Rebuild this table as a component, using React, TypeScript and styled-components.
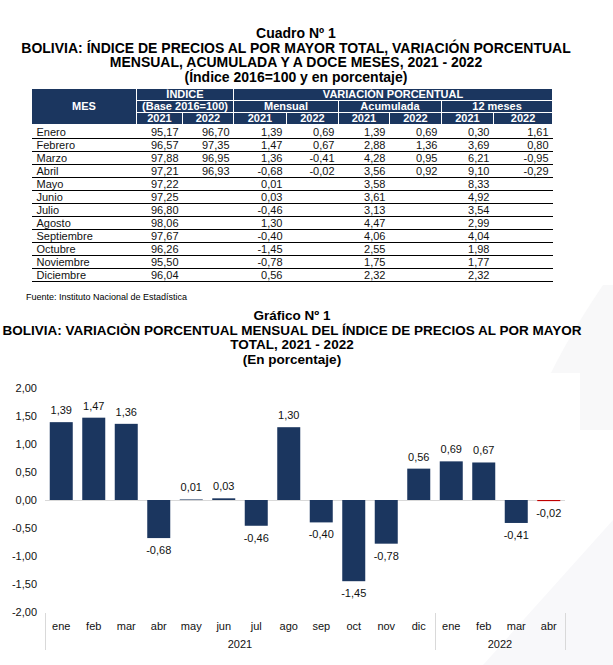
import React from "react";
import styled, { createGlobalStyle } from "styled-components";

const GlobalStyle = createGlobalStyle`
  html, body { margin: 0; padding: 0; background: #ffffff; }
  body { font-family: "Liberation Sans", Arial, sans-serif; color: #000; }
`;

const NAVY = "#1b365f";
const NARROW = `"Liberation Sans Narrow", "Arial Narrow", "Liberation Sans", Arial, sans-serif`;

const Page = styled.div`
  position: relative;
  width: 613px;
  height: 665px;
  overflow: hidden;
  background: #ffffff;
`;

const Decoration = styled.svg`
  position: absolute;
  right: 0;
  top: 0;
  z-index: 0;
`;

const Content = styled.div`
  position: relative;
  z-index: 1;
  width: 584px;
  display: flex;
  flex-direction: column;
`;

const TitleBlock = styled.div<{ $top: number; $size: number; $shift: number }>`
  margin-top: ${(p) => p.$top}px;
  padding-left: ${(p) => p.$shift}px;
  text-align: center;
  font-family: ${NARROW};
  font-weight: bold;
  font-size: ${(p) => p.$size}px;
  line-height: 14.5px;
  color: #000;
  white-space: nowrap;
`;

const TitleLine = styled.div``;

const Table = styled.table`
  width: 521px;
  margin: 4px 0 0 31px;
  border-collapse: collapse;
  table-layout: fixed;
  font-family: "Liberation Sans", Arial, sans-serif;
  font-size: 11px;
`;

const Th = styled.th<{ $last?: boolean; $noBottom?: boolean }>`
  background: ${NAVY};
  color: #ffffff;
  font-weight: bold;
  height: 11px;
  line-height: 11px;
  padding: 0;
  text-align: center;
  border: 1px solid #ffffff;
  border-bottom-width: ${(p) => (p.$last ? 2 : 1)}px;
  ${(p) => (p.$noBottom ? "border-bottom: none;" : "")}
  white-space: nowrap;
  overflow: hidden;
`;

const Tr = styled.tr``;

const Td = styled.td<{ $label?: boolean }>`
  height: 12px;
  line-height: 12px;
  padding: ${(p) => (p.$label ? "0 0 0 5px" : "0 4px 0 0")};
  text-align: ${(p) => (p.$label ? "left" : "right")};
  border-bottom: 1px solid #000;
  color: #111;
  white-space: nowrap;
`;

const Source = styled.div`
  margin: 10px 0 0 26px;
  font-family: "Liberation Sans", Arial, sans-serif;
  font-size: 9px;
  line-height: 10px;
  color: #000;
`;

const ChartSvg = styled.svg`
  display: block;
  margin-top: 6px;
  overflow: visible;
`;

const rows: string[][] = [
  ["Enero", "95,17", "96,70", "1,39", "0,69", "1,39", "0,69", "0,30", "1,61"],
  ["Febrero", "96,57", "97,35", "1,47", "0,67", "2,88", "1,36", "3,69", "0,80"],
  ["Marzo", "97,88", "96,95", "1,36", "-0,41", "4,28", "0,95", "6,21", "-0,95"],
  ["Abril", "97,21", "96,93", "-0,68", "-0,02", "3,56", "0,92", "9,10", "-0,29"],
  ["Mayo", "97,22", "", "0,01", "", "3,58", "", "8,33", ""],
  ["Junio", "97,25", "", "0,03", "", "3,61", "", "4,92", ""],
  ["Julio", "96,80", "", "-0,46", "", "3,13", "", "3,54", ""],
  ["Agosto", "98,06", "", "1,30", "", "4,47", "", "2,99", ""],
  ["Septiembre", "97,67", "", "-0,40", "", "4,06", "", "4,04", ""],
  ["Octubre", "96,26", "", "-1,45", "", "2,55", "", "1,98", ""],
  ["Noviembre", "95,50", "", "-0,78", "", "1,75", "", "1,77", ""],
  ["Diciembre", "96,04", "", "0,56", "", "2,32", "", "2,32", ""],
];

const colWidths = [105, 46, 51, 53, 52, 51, 52, 52, 59];

const series = [
  { m: "ene", v: 1.39 },
  { m: "feb", v: 1.47 },
  { m: "mar", v: 1.36 },
  { m: "abr", v: -0.68 },
  { m: "may", v: 0.01 },
  { m: "jun", v: 0.03 },
  { m: "jul", v: -0.46 },
  { m: "ago", v: 1.3 },
  { m: "sep", v: -0.4 },
  { m: "oct", v: -1.45 },
  { m: "nov", v: -0.78 },
  { m: "dic", v: 0.56 },
  { m: "ene", v: 0.69 },
  { m: "feb", v: 0.67 },
  { m: "mar", v: -0.41 },
  { m: "abr", v: -0.02 },
];

const fmt = (v: number) => v.toFixed(2).replace(".", ",");

function Chart() {
  const X0 = 45;
  const STEP = 32.5;
  const BAR = 23;
  const ZERO = 127;
  const K = 56;
  const ticks = [2, 1.5, 1, 0.5, 0, -0.5, -1, -1.5, -2];
  const font = `"Liberation Sans", Arial, sans-serif`;
  return (
    <ChartSvg width={613} height={285} viewBox="0 0 613 285">
      <rect x={0} y={0} width={580} height={160} fill="#ffffff" />
      {ticks.map((t) => (
        <text
          key={t}
          x={37}
          y={ZERO - t * K}
          textAnchor="end"
          dominantBaseline="central"
          fontFamily={font}
          fontSize={11}
          fill="#111"
        >
          {fmt(t)}
        </text>
      ))}
      <line x1={X0} x2={565} y1={ZERO + 0.5} y2={ZERO + 0.5} stroke="#d9d9d9" strokeWidth={1} />
      {series.map((d, i) => {
        const x = X0 + STEP * i + (STEP - BAR) / 2;
        const h = Math.abs(d.v) * K;
        const y = d.v >= 0 ? ZERO - h : ZERO;
        const cx = X0 + STEP * i + STEP / 2;
        const ly = d.v >= 0 ? ZERO - h - 12 : ZERO + h + 12;
        const color = i === 15 ? "#c00000" : NAVY;
        return (
          <g key={i}>
            <rect x={x} y={y} width={BAR} height={Math.max(h, 0.6)} fill={color} />
            <text
              x={cx}
              y={ly}
              textAnchor="middle"
              dominantBaseline="central"
              fontFamily={font}
              fontSize={11}
              fill="#111"
            >
              {fmt(d.v)}
            </text>
            <text
              x={cx}
              y={253}
              textAnchor="middle"
              dominantBaseline="central"
              fontFamily={font}
              fontSize={11}
              fill="#111"
            >
              {d.m}
            </text>
          </g>
        );
      })}
      {[45, 435, 565].map((x) => (
        <line key={x} x1={x + 0.5} x2={x + 0.5} y1={240} y2={277} stroke="#d9d9d9" strokeWidth={1} />
      ))}
      <text x={240} y={271} textAnchor="middle" dominantBaseline="central" fontFamily={font} fontSize={11} fill="#111">
        2021
      </text>
      <text x={500} y={271} textAnchor="middle" dominantBaseline="central" fontFamily={font} fontSize={11} fill="#111">
        2022
      </text>
    </ChartSvg>
  );
}

export default function App() {
  return (
    <Page>
      <GlobalStyle />
      <Decoration width={160} height={665} viewBox="0 0 160 665">
        <path d="M150,285 C120,330 90,380 75,430 L160,430 L160,285 Z" fill="#f8f8f9" />
        <path d="M160,520 L30,665 L160,665 Z" fill="#f8f8fa" />
      </Decoration>
      <Content>
        <TitleBlock $top={26} $size={14} $shift={8}>
          <TitleLine>Cuadro Nº 1</TitleLine>
          <TitleLine>BOLIVIA: ÍNDICE DE PRECIOS AL POR MAYOR TOTAL, VARIACIÓN PORCENTUAL</TitleLine>
          <TitleLine>MENSUAL, ACUMULADA Y A DOCE MESES, 2021 - 2022</TitleLine>
          <TitleLine>(Índice 2016=100 y en porcentaje)</TitleLine>
        </TitleBlock>
        <Table>
          <colgroup>
            {colWidths.map((w, i) => (
              <col key={i} style={{ width: w }} />
            ))}
          </colgroup>
          <thead>
            <Tr>
              <Th rowSpan={3} $last>
                MES
              </Th>
              <Th colSpan={2} $noBottom>
                ÍNDICE
              </Th>
              <Th colSpan={6}>VARIACIÓN PORCENTUAL</Th>
            </Tr>
            <Tr>
              <Th colSpan={2}>(Base 2016=100)</Th>
              <Th colSpan={2}>Mensual</Th>
              <Th colSpan={2}>Acumulada</Th>
              <Th colSpan={2}>12 meses</Th>
            </Tr>
            <Tr>
              {["2021", "2022", "2021", "2022", "2021", "2022", "2021", "2022"].map((y, i) => (
                <Th key={i} $last>
                  {y}
                </Th>
              ))}
            </Tr>
          </thead>
          <tbody>
            {rows.map((r) => (
              <Tr key={r[0]}>
                {r.map((c, i) => (
                  <Td key={i} $label={i === 0}>
                    {c}
                  </Td>
                ))}
              </Tr>
            ))}
          </tbody>
        </Table>
        <Source>Fuente: Instituto Nacional de Estadística</Source>
        <TitleBlock $top={7} $size={13.5} $shift={0}>
          <TitleLine>Gráfico Nº 1</TitleLine>
          <TitleLine>BOLIVIA: VARIACIÒN PORCENTUAL MENSUAL DEL ÍNDICE DE PRECIOS AL POR MAYOR</TitleLine>
          <TitleLine>TOTAL, 2021 - 2022</TitleLine>
          <TitleLine>(En porcentaje)</TitleLine>
        </TitleBlock>
        <Chart />
      </Content>
    </Page>
  );
}
